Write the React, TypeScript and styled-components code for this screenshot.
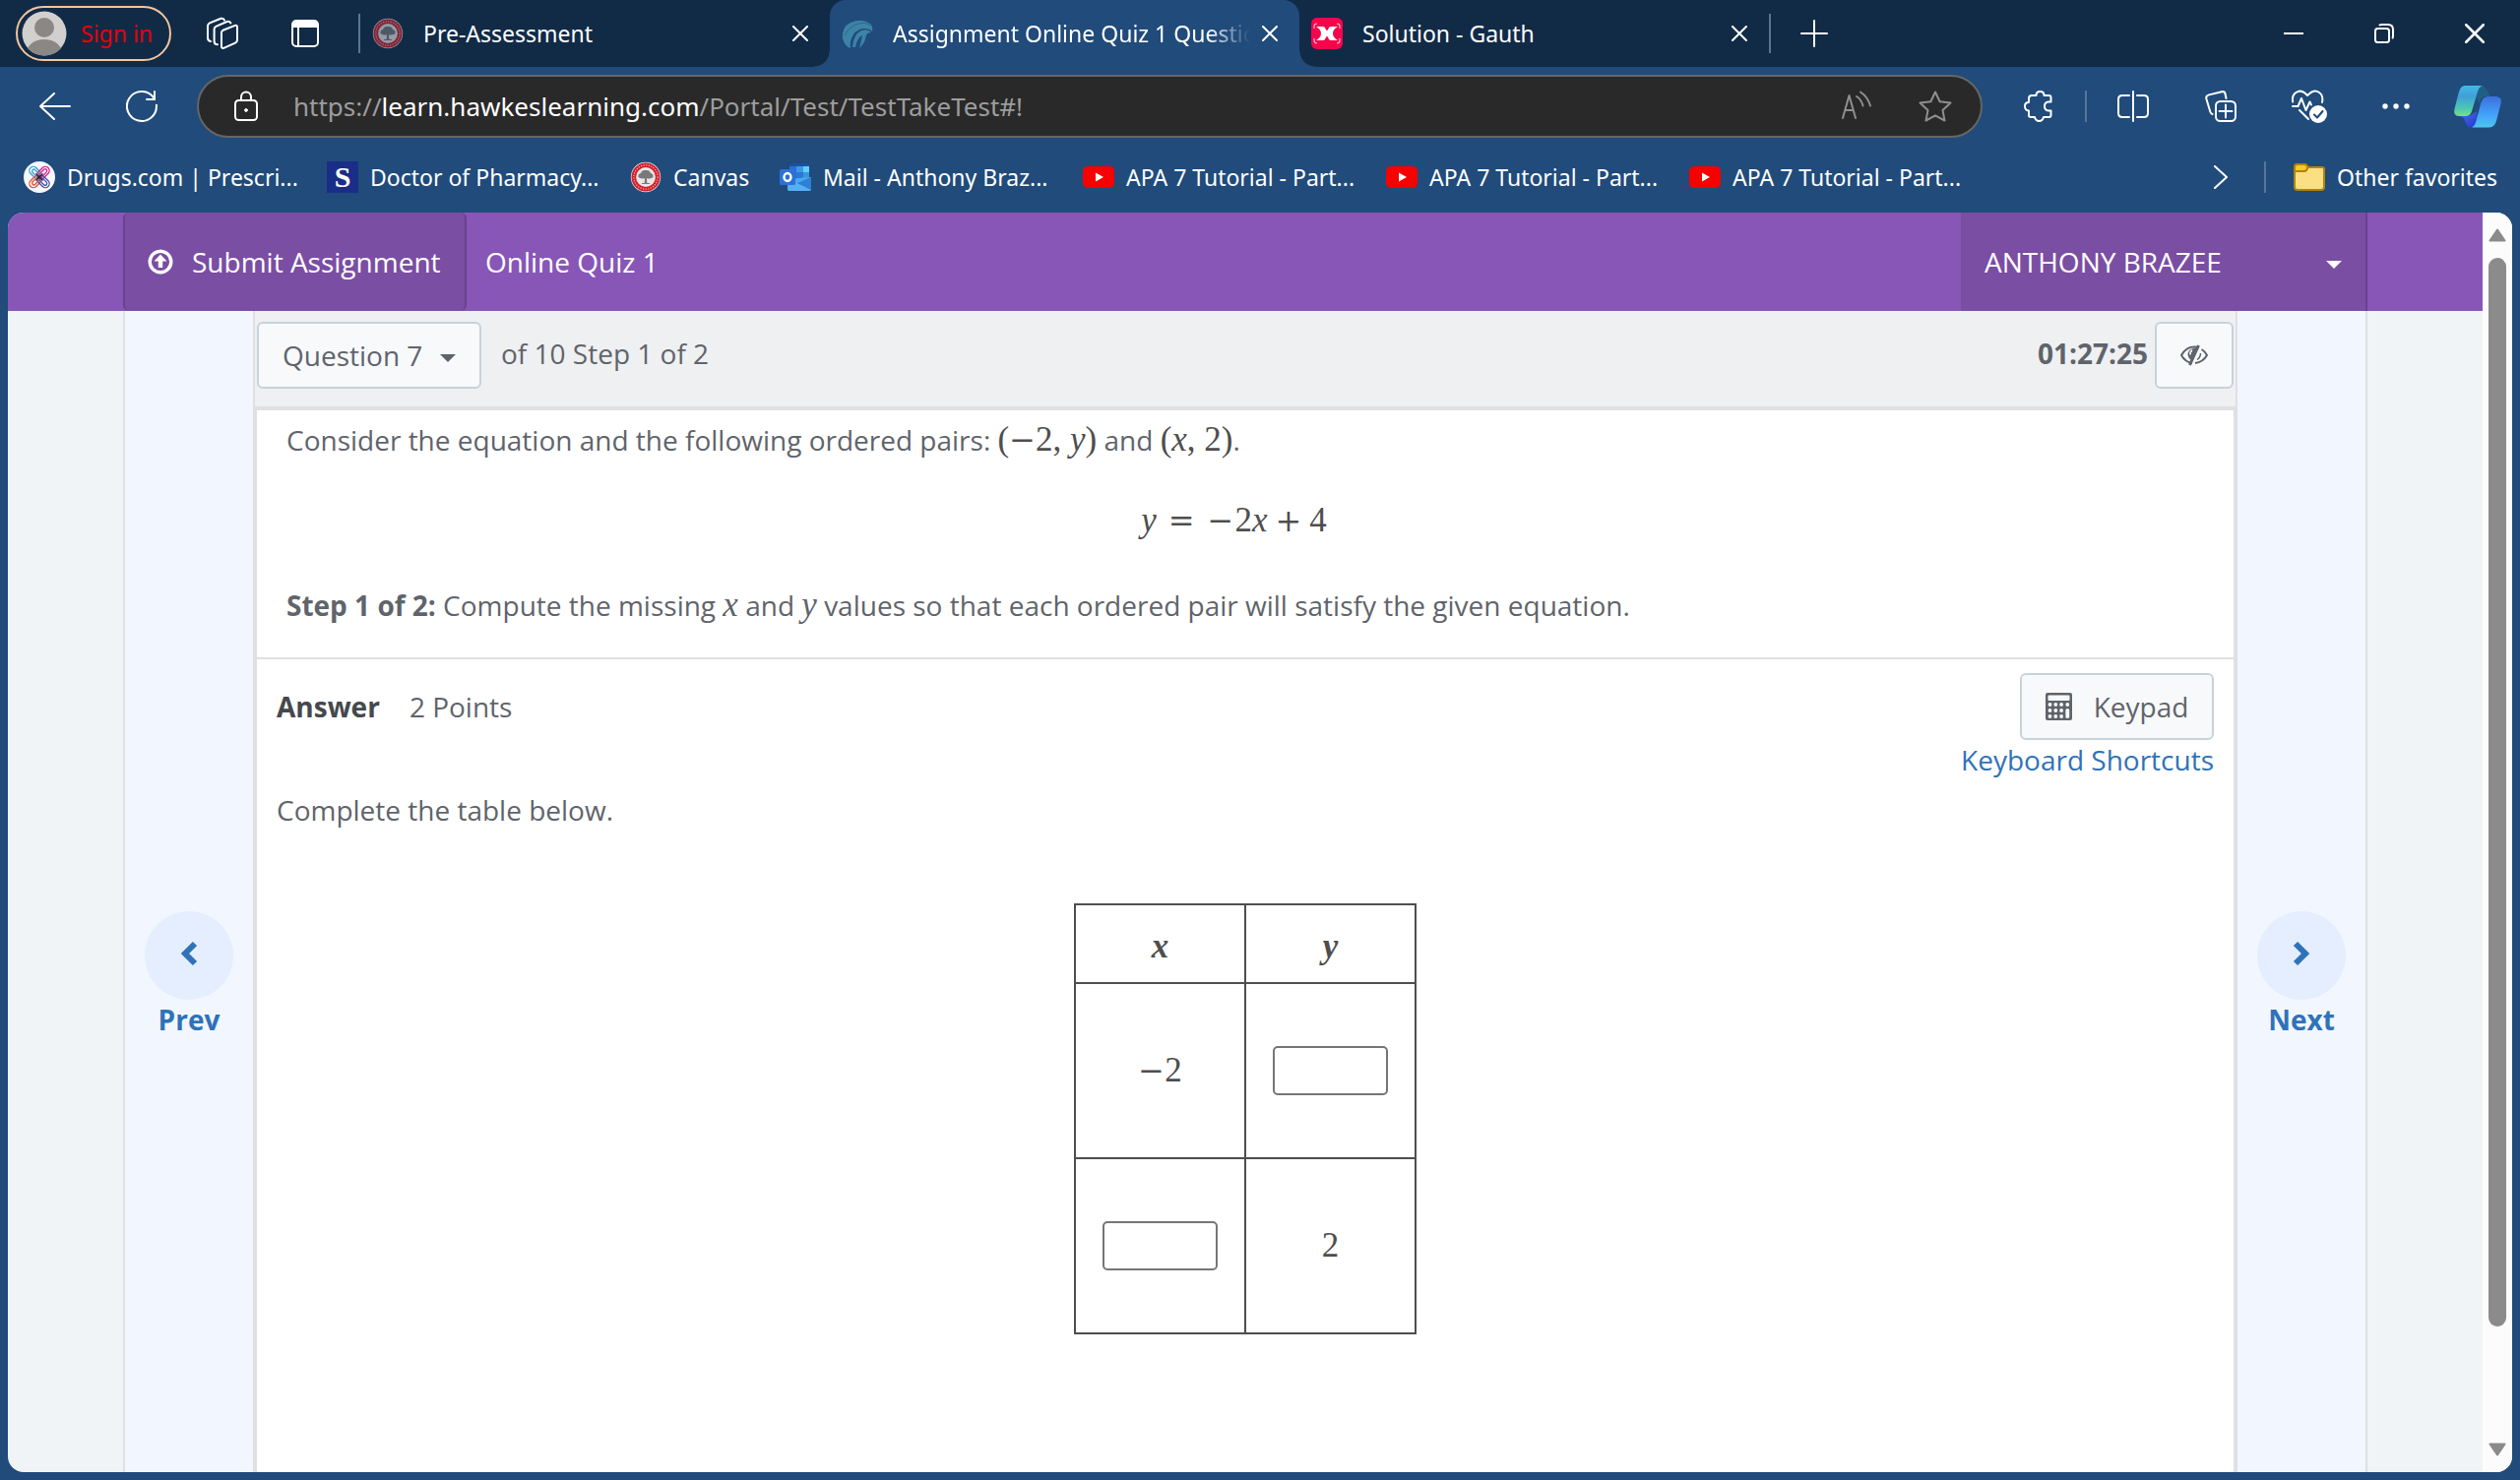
import React from "react";
import styled, { createGlobalStyle, css } from "styled-components";

const chromeFont = '"Noto Sans", "Open Sans", sans-serif';
const pageFont = '"Open Sans", "Noto Sans", sans-serif';
const mathFont = '"Liberation Serif", "Times New Roman", serif';

const GlobalStyle = createGlobalStyle`
  *, *::before, *::after { box-sizing: border-box; }
  html, body { margin: 0; padding: 0; overflow: hidden; }
  body { background: #204b7b; font-family: ${pageFont}; }
  button, input, select { font: inherit; color: inherit; margin: 0; }
  svg { display: block; flex: none; }
`;

/* ---------- Browser window ---------- */

const Window = styled.div`
  display: flex;
  flex-direction: column;
  height: 100vh;
  background: #204b7b;
  color: #ffffff;
  font-family: ${chromeFont};
  font-size: 23px;
  line-height: 32px;
`;

const TabStrip = styled.div`
  display: flex;
  align-items: center;
  flex: none;
  height: 68px;
  padding-left: 16px;
  background: #112b47;
`;

const plainButton = css`
  display: flex;
  align-items: center;
  justify-content: center;
  padding: 0;
  border: 0;
  background: none;
  cursor: pointer;
`;

const ProfileButton = styled.button`
  ${plainButton}
  justify-content: flex-start;
  gap: 14px;
  width: 158px;
  height: 56px;
  padding-left: 4px;
  border: 2px solid #f6c49b;
  border-radius: 28px;
  color: #e60008;
`;

const StripButton = styled.button<{ $width: number }>`
  ${plainButton}
  width: ${(p) => p.$width}px;
  height: 68px;
  flex: none;
`;

const StripIcons = styled.div`
  display: flex;
  padding-left: 10px;
  padding-right: 12px;
`;

const Divider = styled.span<{ $height: number; $gap?: number }>`
  flex: none;
  width: 2px;
  height: ${(p) => p.$height}px;
  margin: 0 ${(p) => p.$gap ?? 0}px;
  background: #587596;
`;

const Tab = styled.div<{ $active?: boolean }>`
  position: relative;
  display: flex;
  align-items: center;
  flex: 0 1 477px;
  min-width: 0;
  height: 68px;
  padding: 0 10px 0 12px;
  ${(p) =>
    p.$active &&
    css`
      background: #204b7b;
      border-radius: 16px 16px 0 0;
      &::before,
      &::after {
        content: "";
        position: absolute;
        bottom: 0;
        width: 16px;
        height: 16px;
      }
      &::before {
        left: -16px;
        background: radial-gradient(circle at 0 0, #112b47 15px, #204b7b 16px);
      }
      &::after {
        right: -16px;
        background: radial-gradient(circle at 100% 0, #112b47 15px, #204b7b 16px);
      }
    `}
`;

const TabTitle = styled.span<{ $fade?: boolean }>`
  flex: 1;
  min-width: 0;
  margin-left: 20px;
  overflow: hidden;
  white-space: nowrap;
  ${(p) => p.$fade && "mask-image: linear-gradient(to right, #000 88%, transparent 100%);"}
`;

const CloseButton = styled.button`
  ${plainButton}
  flex: none;
  width: 40px;
  height: 40px;
`;

const Spacer = styled.div`
  flex: 1;
`;

const Toolbar = styled.div`
  display: flex;
  align-items: center;
  flex: none;
  height: 80px;
  padding: 0 3px 0 12px;
`;

const ToolButton = styled.button<{ $width?: number }>`
  ${plainButton}
  flex: none;
  width: ${(p) => p.$width ?? 88}px;
  height: 64px;
`;

const AddressBar = styled.div`
  display: flex;
  align-items: center;
  flex: 1;
  height: 64px;
  margin: 0 13px 0 12px;
  padding-right: 6px;
  border: 2px solid #666666;
  border-radius: 32px;
  background: #292929;
  color: #9d9d9d;
  font-size: 26px;
  line-height: 40px;
`;

const UrlLabel = styled.label`
  white-space: pre;
`;

const Host = styled.span`
  color: #ffffff;
`;

const UrlInput = styled.input`
  flex: 1;
  min-width: 0;
  height: 56px;
  padding: 0;
  border: 0;
  outline: 0;
  background: none;
`;

const FavoritesBar = styled.nav`
  display: flex;
  align-items: center;
  flex: none;
  height: 64px;
  margin-bottom: 4px;
  padding: 0 24px;
`;

const Favorite = styled.a<{ $width?: number }>`
  display: flex;
  align-items: center;
  gap: 12px;
  flex: none;
  width: ${(p) => (p.$width ? `${p.$width}px` : "auto")};
  color: #ffffff;
  text-decoration: none;
  white-space: nowrap;
`;

const LetterBadge = styled.span`
  flex: none;
  width: 32px;
  height: 32px;
  background: #1b2e87;
  font: bold 30px/32px ${mathFont};
  text-align: center;
`;

/* ---------- Web page ---------- */

const Viewport = styled.div`
  display: flex;
  flex: 1;
  min-height: 0;
  margin: 0 8px 8px;
  overflow: hidden;
  border-radius: 16px;
  background: #f0f4f7;
  color: #5f646b;
  font-family: ${pageFont};
  font-size: 28px;
  line-height: 40px;
`;

const Page = styled.div`
  display: flex;
  flex-direction: column;
  flex: 1;
  min-width: 0;
`;

const PageHeader = styled.header`
  display: flex;
  flex: none;
  height: 100px;
  padding: 0 117px;
  background: #8756b7;
  color: #ffffff;
`;

const SubmitButton = styled.button`
  ${plainButton}
  justify-content: flex-start;
  gap: 19px;
  width: 349px;
  padding-left: 23px;
  border: solid #68428c;
  border-width: 0 2px;
  border-radius: 6px;
  background: #7a4ea3;
`;

const QuizTitle = styled.h1`
  flex: 1;
  margin: 0 19px;
  font-size: 28px;
  font-weight: 400;
  line-height: 100px;
`;

const UserButton = styled.button`
  ${plainButton}
  justify-content: space-between;
  width: 413px;
  padding: 0 24px;
  border-right: 2px solid #68428c;
  background: #7a4ea3;
`;

const Columns = styled.div`
  display: flex;
  flex: 1;
  min-height: 0;
  margin: 0 117px;
`;

const StepButton = styled.button<{ $side: "left" | "right" }>`
  display: flex;
  flex-direction: column;
  align-items: center;
  flex: none;
  width: 132px;
  padding: 610px 0 0;
  border: 0 solid #dfe1e4;
  border-${(p) => p.$side}-width: 2px;
  background: #f2f7ff;
  color: #3072b8;
  font-weight: 700;
  cursor: pointer;
`;

const StepCircle = styled.span`
  display: flex;
  align-items: center;
  justify-content: center;
  width: 90px;
  height: 90px;
  padding-bottom: 4px;
  border-radius: 50%;
  background: #e4eeff;
`;

const Main = styled.main`
  display: flex;
  flex-direction: column;
  flex: 1;
  min-width: 0;
  border: solid #dfe0e2;
  border-width: 0 2px;
`;

const QuestionBar = styled.div`
  display: flex;
  align-items: flex-start;
  flex: none;
  height: 97px;
  padding: 11px 2px 0;
  background: #eff0f2;
`;

const outlined = css`
  border: 2px solid #c6d3da;
  border-radius: 6px;
  background: #f8f9fb;
`;

const QuestionPicker = styled.label`
  ${outlined}
  display: grid;
  grid-template-columns: 1fr 40px;
  align-items: center;
  width: 228px;
  height: 68px;
  margin-right: 20px;

  > select {
    grid-area: 1 / 1 / 2 / 3;
    height: 64px;
    padding: 0 0 0 24px;
    border: 0;
    outline: 0;
    background: none;
    appearance: none;
  }
  > svg {
    grid-area: 1 / 2;
    pointer-events: none;
  }
`;

const BarText = styled.span`
  line-height: 64px;
`;

const Timer = styled.time`
  margin-left: auto;
  padding-right: 7px;
  font-weight: 700;
  line-height: 64px;
`;

const OutlinedButton = styled.button<{ $width: number }>`
  ${plainButton}
  ${outlined}
  gap: 22px;
  width: ${(p) => p.$width}px;
  height: 68px;
`;

const Sheet = styled.div`
  flex: 1;
  min-height: 0;
  border: 2px solid #e0e0e0;
  border-top-width: 4px;
  border-bottom: 0;
  background: #ffffff;
`;

const Problem = styled.section`
  padding: 10px 53px 33px 30px;
  border-bottom: 2px solid #e0e0e0;
`;

const Line = styled.p`
  height: 40px;
  margin: 0;
`;

const Equation = styled.div`
  height: 128px;
  padding-top: 42px;
  text-align: center;
`;

const Math = styled.span<{ $muted?: boolean }>`
  color: ${(p) => (p.$muted ? "inherit" : "#4e4e4e")};
  font-family: ${mathFont};
  font-size: 35px;
  white-space: nowrap;
`;

const Op = styled.span<{ $before?: number; $after?: number }>`
  margin-left: ${(p) => p.$before ?? 0}px;
  margin-right: ${(p) => p.$after ?? 0}px;
  font-family: "DejaVu Serif", serif;
  font-size: 32px;
  line-height: 1;
`;

const AnswerSection = styled.section`
  padding: 14px 20px 0;
`;

const AnswerHead = styled.div`
  display: flex;
  align-items: flex-start;
  gap: 30px;
  line-height: 68px;
`;

const AnswerTitle = styled.h2`
  margin: 0;
  color: #45484d;
  font-size: 28px;
  font-weight: 700;
`;

const Tools = styled.div`
  display: flex;
  flex-direction: column;
  align-items: flex-end;
  margin-left: auto;
  line-height: 40px;
`;

const ShortcutLink = styled.a`
  color: #3072b8;
  text-decoration: none;
`;

const Instruction = styled.p`
  margin: 11px 0 75px;
`;

const ValueTable = styled.table`
  width: 348px;
  margin: 0 auto;
  border-collapse: collapse;
  table-layout: fixed;
  color: #4e4e4e;

  th,
  td {
    padding: 0;
    border: 2px solid #4e4e4e;
    text-align: center;
    vertical-align: middle;
  }
  th {
    height: 80px;
    padding-top: 6px;
  }
  td {
    height: 178px;
  }
`;

const ValueInput = styled.input`
  display: block;
  width: 117px;
  height: 50px;
  margin: 0 auto;
  padding: 0 8px;
  border: 2px solid #767676;
  border-radius: 5px;
  background: #ffffff;
`;

const Scrollbar = styled.div`
  display: flex;
  flex-direction: column;
  align-items: center;
  flex: none;
  width: 30px;
  padding: 16px 0;
  background: #fcfcfc;
`;

const Track = styled.div`
  display: grid;
  grid-template-rows: 32fr 3fr;
  flex: 1;
  width: 18px;
  margin: 16px 0;
`;

const Thumb = styled.div`
  border-radius: 9px;
  background: #8b8b8b;
`;

/* ---------- Drawings ---------- */

const line = { fill: "none", stroke: "#ffffff", strokeWidth: 2, strokeLinecap: "round" as const, strokeLinejoin: "round" as const };

const Avatar = () => (
  <svg width="46" height="46" viewBox="0 0 46 46">
    <defs>
      <clipPath id="avatarClip">
        <circle cx="23" cy="23" r="22.5" />
      </clipPath>
    </defs>
    <circle cx="23" cy="23" r="22.5" fill="#d2d0ce" />
    <g fill="#8a8784" clipPath="url(#avatarClip)">
      <circle cx="23" cy="17" r="10" />
      <ellipse cx="23" cy="43" rx="18" ry="14" />
    </g>
  </svg>
);

const WorkspacesIcon = () => (
  <svg width="36" height="36" viewBox="0 0 36 36" {...line}>
    <path d="M18.5 14.8 30.8 9.9Q33 9.3 33 11.6V24.6Q33 26.8 31 27.7L19.3 32.8Q17 33.5 17 31.2V17.2Q17 15.5 18.5 14.8Z" />
    <path d="M13 29.2Q9.6 29.2 9.6 26V13.6Q9.6 11.6 11.4 10.8L22.5 6Q25 5.2 26.4 7.4" />
    <path d="M6 26Q3 25.4 3 22.4V10.6Q3 8.4 5 7.4L16.4 2.8Q18.8 2.2 20 4.4" />
  </svg>
);

const TabMenuIcon = () => (
  <svg width="28" height="28" viewBox="0 0 28 28">
    <rect x="1" y="1" width="26" height="26" rx="4" {...line} />
    <path d="M1 8V4Q1 1 4 1H24Q27 1 27 4V8Z" fill="#fff" />
    <path d="M7 8V27" {...line} />
  </svg>
);

const CloseIcon = ({ size = 16 }: { size?: number }) => (
  <svg width={size} height={size} viewBox="0 0 16 16" {...line}>
    <path d="M1 1 15 15M15 1 1 15" />
  </svg>
);

const PlusIcon = () => (
  <svg width="28" height="28" viewBox="0 0 28 28" {...line}>
    <path d="M14 1V27M1 14H27" />
  </svg>
);

const MinimizeIcon = () => (
  <svg width="20" height="20" viewBox="0 0 20 20" {...line}>
    <path d="M0 10H20" />
  </svg>
);

const RestoreIcon = () => (
  <svg width="20" height="20" viewBox="0 0 20 20" {...line}>
    <rect x="1" y="5" width="14" height="14" rx="2.5" />
    <path d="M5.5 1.4Q6.3 1 8 1H14Q19 1 19 6V12Q19 13.7 18.6 14.5" />
  </svg>
);

const BackIcon = () => (
  <svg width="32" height="28" viewBox="0 0 32 28" {...line}>
    <path d="M15 1 1 14 15 27M1 14H31" />
  </svg>
);

const RefreshIcon = () => (
  <svg width="32" height="32" viewBox="0 0 32 32" {...line}>
    <path d="M30.9 14.8A15 15 0 1 1 27.5 6.4L29 8.8" />
    <path d="M29 1V9H21" strokeLinejoin="miter" />
  </svg>
);

const LockIcon = () => (
  <svg width="24" height="32" viewBox="0 0 24 32" {...line}>
    <rect x="1" y="10" width="22" height="20" rx="3.5" />
    <path d="M7 10V6.5A5 5 0 0 1 17 6.5V10" />
    <circle cx="12" cy="20" r="1.4" fill="#fff" strokeWidth="1" />
  </svg>
);

const ReadAloudIcon = () => (
  <svg width="32" height="32" viewBox="0 0 32 32" {...line} stroke="#8f8f8f">
    <path d="M2 28 8.500 5 15 28M4.400 20H12.800" />
    <path d="M16 6Q21 9 22.500 15.500M20 1.500Q27.500 6.500 30 15.500" />
  </svg>
);

const StarIcon = () => (
  <svg width="34" height="32" viewBox="0 0 34 32" {...line} stroke="#8f8f8f">
    <path d="M17 1.500 21.600 11.200 32.500 12.500 24.500 20 26.500 30.500 17 25.400 7.500 30.500 9.500 20 1.500 12.500 12.400 11.200Z" />
  </svg>
);

const PuzzleIcon = () => (
  <svg width="30" height="32" viewBox="0 0 30 32" {...line}>
    <path d="M5 8Q5 5 8 5H12.500Q12.500 1 16.500 1T20.500 5H25.500Q27.500 5 27.500 7V11.500H25Q21 12 21 16T25 20.500H27.500V25Q27.500 27 25.500 27H20Q19 31 15.500 31T11 27H7Q5 27 5 25V20.500Q1 20 1 16T5 12Z" />
  </svg>
);

const SplitIcon = () => (
  <svg width="32" height="32" viewBox="0 0 32 32" {...line}>
    <path d="M16 1V31M12 5H5Q1 5 1 9V23Q1 27 5 27H12M20 5H27Q31 5 31 9V23Q31 27 27 27H20" />
  </svg>
);

const CollectionsIcon = () => (
  <svg width="32" height="32" viewBox="0 0 32 32" {...line}>
    <rect x="11" y="11" width="20" height="20" rx="4.500" />
    <path d="M21 14.500V27.500M14.500 21H27.500M21.500 8 20.600 3.600Q20 .6 17 1.200L4 4.400Q.6 5.400 1.400 8.500L5.300 21.500Q6 23.500 7.500 24" />
  </svg>
);

const HeartIcon = () => (
  <svg width="36" height="34" viewBox="0 0 36 34" {...line}>
    <path d="M1.200 12.500Q0 6 4.500 3T13.500 3.500L16 6 19 3.400Q23.500 0 28 3T31 13" />
    <path d="M1 17H6.500L10 9 14.500 21 18.500 12.500 20 15.500M8 21 17 30" />
    <circle cx="27" cy="25" r="9" fill="#fff" stroke="none" />
    <path d="M23 25.500 26 28.500 31.500 22" stroke="#204b7b" />
  </svg>
);

const DotsIcon = () => (
  <svg width="28" height="6" viewBox="0 0 28 6" fill="#fff">
    <circle cx="3" cy="3" r="2.700" />
    <circle cx="14" cy="3" r="2.700" />
    <circle cx="25" cy="3" r="2.700" />
  </svg>
);

const CopilotIcon = () => (
  <svg width="52" height="46" viewBox="0 0 52 46">
    <defs>
      <linearGradient id="copA" x1="0" y1="0" x2="0" y2="1">
        <stop offset="0" stopColor="#45b8e6" />
        <stop offset="0.35" stopColor="#3f9fd8" />
        <stop offset="0.75" stopColor="#4cc8b4" />
        <stop offset="1" stopColor="#7be07f" />
      </linearGradient>
      <linearGradient id="copB" x1="0" y1="0" x2="0" y2="1">
        <stop offset="0" stopColor="#3c6fdc" />
        <stop offset="0.6" stopColor="#43a3fb" />
        <stop offset="1" stopColor="#4cc6ec" />
      </linearGradient>
      <linearGradient id="copC" x1="0" y1="0" x2="1" y2="1">
        <stop offset="0" stopColor="#3f74e8" />
        <stop offset="1" stopColor="#2a31cf" />
      </linearGradient>
    </defs>
    <path d="M24 2H29Q34 2 36 8L39 13H33Q29 14 28 20L24 14Z" fill="#1f5f83" />
    <path d="M10 33H17L25 28 27 38Q24 44 19 44.500 15 44 13.500 39Q12.500 34 8 33Z" fill="url(#copC)" />
    <path d="M13 2H31Q27.500 3 26 8L20 28Q18.500 33 14 33H7Q1 32.500 2.400 26L7 8Q9 2 13 2Z" fill="url(#copA)" />
    <path d="M37 13H45Q51 13.500 49.600 20L45 38Q43 44 38 44.500H20Q23 43 24.500 38L29.500 19Q31.500 13 37 13Z" fill="url(#copB)" />
  </svg>
);

const SealIcon = ({ dim }: { dim?: boolean }) => (
  <svg width="32" height="32" viewBox="0 0 32 32" opacity={dim ? 0.6 : 1}>
    <circle cx="16" cy="16" r="15.200" fill="#e9e6e6" />
    <circle cx="16" cy="16" r="12.200" fill="none" stroke="#d1202c" strokeWidth="4.600" />
    <circle cx="16" cy="16" r="12.200" fill="none" stroke="#f0a9a9" strokeWidth="1.200" strokeDasharray="1.300 1.300" />
    <path d="M8.500 16Q8 12.500 11 12 12 8.500 16 9 20 8.500 21 12 24 12.500 23.500 16 22 18 17 17.200L17.300 22H14.700L15 17.200Q10 18 8.500 16Z" fill="#77797c" />
    <path d="M12 22.500H20" stroke="#77797c" />
  </svg>
);

const HawkIcon = () => (
  <svg width="32" height="32" viewBox="0 0 32 32">
    <path d="M1 21Q0 9 9 5 20 0 29 6 32 9 31 14 28 10.500 21 11 13 13 10 21 8 27 9 31 3 29 1 21Z" fill="#3c83a6" />
    <path d="M11 30Q12 17 20 13 27 11 30 15 25 15 24.500 20 23.500 26 18 31 20 23 21 18 16 20 14 30Z" fill="#3c83a6" />
    <path d="M3 18Q8 8 17 6T29 8" fill="none" stroke="#2c6992" strokeWidth="1" />
  </svg>
);

const GauthIcon = () => (
  <svg width="32" height="32" viewBox="0 0 32 32">
    <rect width="32" height="32" rx="6" fill="#f7054b" />
    <path d="M5 9H12Q14 9 14.500 11 15 13 16 13T17.500 11Q18 9 20 9H27Q22 12 22 16T27 23H20Q18 23 17.500 21 17 19 16 19T14.500 21Q14 23 12 23H5Q10 20 10 16T5 9Z" fill="#fff" />
    <path d="M3 11V9Q3 6 6 6M3 21V23Q3 26 6 26M29 11V9Q29 6 26 6M29 21V23Q29 26 26 26" fill="none" stroke="#ffb3c8" strokeWidth="1.200" />
  </svg>
);

const DrugsIcon = () => (
  <svg width="32" height="32" viewBox="0 0 32 32" fill="none" strokeWidth="1.300">
    <circle cx="16" cy="16" r="16" fill="#f7f8fb" />
    <g stroke="#3aa0dc">
      <rect x="5" y="7.500" width="14" height="8" rx="4" transform="rotate(45 12 11.500)" />
      <rect x="8" y="9.700" width="9" height="3.600" rx="1.800" transform="rotate(45 12 11.500)" />
    </g>
    <g stroke="#d6218b">
      <rect x="13" y="7.500" width="14" height="8" rx="4" transform="rotate(-45 20 11.500)" />
      <rect x="15.500" y="9.700" width="9" height="3.600" rx="1.800" transform="rotate(-45 20 11.500)" />
    </g>
    <g stroke="#e2513a">
      <rect x="5" y="16.500" width="14" height="8" rx="4" transform="rotate(-45 12 20.500)" />
      <rect x="8" y="18.700" width="9" height="3.600" rx="1.800" transform="rotate(-45 12 20.500)" />
    </g>
    <g stroke="#4a4fb0">
      <rect x="13" y="16.500" width="14" height="8" rx="4" transform="rotate(45 20 20.500)" />
      <rect x="15.500" y="18.700" width="9" height="3.600" rx="1.800" transform="rotate(45 20 20.500)" />
    </g>
    <path d="M12.500 12.500 19.500 19.500M19.500 12.500 12.500 19.500" stroke="#20242c" />
  </svg>
);

const OutlookIcon = () => (
  <svg width="32" height="32" viewBox="0 0 32 32">
    <path d="M10 3.500Q10 2 11.500 2H28.500Q30 2 30 3.500V20H10Z" fill="#2a6fd0" />
    <path d="M10 2H30V5H10Z" fill="#1c4ea0" />
    <path d="M17 5H24V11H17Z" fill="#3d9ae6" />
    <path d="M24 5H30V11H24Z" fill="#5fd0fb" />
    <path d="M24 11H30V17H24Z" fill="#3a96e2" />
    <path d="M17 11H24V17H17Z" fill="#2c78d4" />
    <path d="M8 18 32 16V28Q32 30 30 30H10Q8 30 8 28Z" fill="#4aa8ee" />
    <path d="M32 16V29L18 22Z" fill="#2f80d2" />
    <path d="M8 18 32 29.500 30 30H10Q8 30 8 28Z" fill="#55b0f2" />
    <rect y="8" width="16" height="16" rx="1.500" fill="#2b71d8" />
    <ellipse cx="8" cy="16" rx="3.500" ry="4" fill="none" stroke="#fff" strokeWidth="2.400" />
  </svg>
);

const YoutubeIcon = () => (
  <svg width="32" height="32" viewBox="0 0 32 32">
    <rect y="5" width="32" height="22" rx="5" fill="#f80000" />
    <path d="M13 11.500V20.500L21 16Z" fill="#fff" />
  </svg>
);

const FolderIcon = () => (
  <svg width="32" height="32" viewBox="0 0 32 32" stroke="#b0840b" strokeWidth="2" strokeLinejoin="round">
    <path d="M1 6Q1 3 4 3H11Q13 3 14 5L15 6H29Q31 6 31 8V26Q31 29 28 29H4Q1 29 1 26Z" fill="#fbdf83" />
    <path d="M1 10V6Q1 3 4 3H11Q13 3 14.500 6 13.500 10 11 10Z" fill="#f5c92f" />
  </svg>
);

const MoreIcon = () => (
  <svg width="14" height="24" viewBox="0 0 14 24" {...line}>
    <path d="M1 1 13 12 1 23" />
  </svg>
);

const UploadIcon = () => (
  <svg width="26" height="26" viewBox="0 0 26 26">
    <circle cx="13" cy="13" r="10.800" fill="none" stroke="#fff" strokeWidth="3.400" />
    <path d="M13 5.500 19.500 12.500H15.200V19H10.800V12.500H6.500Z" fill="#fff" />
  </svg>
);

const CaretIcon = () => (
  <svg width="16" height="14" viewBox="0 0 16 14" fill="currentColor">
    <path d="M0 6H16L8 14Z" />
  </svg>
);

const HideIcon = () => (
  <svg width="28" height="22" viewBox="0 0 28 22" fill="none" stroke="#5f646b" strokeWidth="2">
    <path d="M12 19Q5 18 1 11 6 2.500 14 2.500L17 2.800M15 19Q23 18 27 11 25 7 21.500 5" />
    <path d="M18.500 1 9.500 21" strokeWidth="3" />
    <path d="M14 4Q7.500 5 7.500 10.500 8 14 11 16L17 4Z" fill="#5f646b" stroke="none" />
    <path d="M12 6Q9.500 7.500 10 10.500" stroke="#f8f9fb" strokeWidth="1.500" />
    <path d="M20.500 9Q20.500 13 17 15.500" strokeWidth="1.500" />
  </svg>
);

const CalculatorIcon = () => (
  <svg width="27" height="28" viewBox="0 0 27 28">
    <rect width="27" height="28" rx="2" fill="#5f646b" />
    <rect x="2.500" y="2.500" width="22" height="5.500" rx="1" fill="#f8f9fb" />
    <g fill="#f8f9fb">
      {[12, 18, 24].flatMap((y) => [4.5, 10.3, 16.1].map((x) => <circle key={`${x}-${y}`} cx={x} cy={y} r="1.900" />))}
      <circle cx="22.300" cy="12" r="1.900" />
      <rect x="20.400" y="16" width="3.800" height="10" rx="1.800" />
    </g>
  </svg>
);

const Chevron = ({ flip }: { flip?: boolean }) => (
  <svg width="20" height="28" viewBox="0 0 20 28" fill="none" stroke="#3072b8" strokeWidth="6">
    <path d={flip ? "M4 4 14 14 4 24" : "M16 4 6 14 16 24"} />
  </svg>
);

const ScrollArrow = ({ down }: { down?: boolean }) => (
  <svg width="18" height="14" viewBox="0 0 18 14" fill="#8b8b8b" stroke="#8b8b8b" strokeWidth="2" strokeLinejoin="round">
    <path d={down ? "M1.500 1.500H16.500L9 12.500Z" : "M1.500 12.500H16.500L9 1.500Z"} />
  </svg>
);

/* ---------- Composition ---------- */

const tabs = [
  { title: "Pre-Assessment", icon: <SealIcon dim /> },
  { title: "Assignment Online Quiz 1 Question 7", icon: <HawkIcon />, active: true },
  { title: "Solution - Gauth", icon: <GauthIcon /> },
];

const favorites = [
  { label: "Drugs.com | Prescri...", icon: <DrugsIcon />, width: 308 },
  { label: "Doctor of Pharmacy...", icon: <LetterBadge>S</LetterBadge>, width: 308 },
  { label: "Canvas", icon: <SealIcon />, width: 152 },
  { label: "Mail - Anthony Braz...", icon: <OutlookIcon />, width: 308 },
  { label: "APA 7 Tutorial - Part...", icon: <YoutubeIcon />, width: 308 },
  { label: "APA 7 Tutorial - Part...", icon: <YoutubeIcon />, width: 308 },
  { label: "APA 7 Tutorial - Part...", icon: <YoutubeIcon />, width: 308 },
];

export default function App() {
  return (
    <Window>
      <GlobalStyle />
      <TabStrip>
        <ProfileButton>
          <Avatar />
          Sign in
        </ProfileButton>
        <StripIcons>
          <StripButton $width={84} aria-label="Workspaces"><WorkspacesIcon /></StripButton>
          <StripButton $width={84} aria-label="Tab actions"><TabMenuIcon /></StripButton>
        </StripIcons>
        <Divider $height={40} />
        {tabs.map((tab) => (
          <Tab key={tab.title} $active={tab.active}>
            {tab.icon}
            <TabTitle $fade={tab.active}>{tab.title}</TabTitle>
            <CloseButton aria-label="Close tab"><CloseIcon /></CloseButton>
          </Tab>
        ))}
        <Divider $height={40} />
        <StripButton $width={88} aria-label="New tab"><PlusIcon /></StripButton>
        <Spacer />
        <StripButton $width={92} aria-label="Minimize"><MinimizeIcon /></StripButton>
        <StripButton $width={92} aria-label="Restore"><RestoreIcon /></StripButton>
        <StripButton $width={92} aria-label="Close"><CloseIcon size={20} /></StripButton>
      </TabStrip>

      <Toolbar>
        <ToolButton aria-label="Back"><BackIcon /></ToolButton>
        <ToolButton aria-label="Refresh"><RefreshIcon /></ToolButton>
        <AddressBar>
          <ToolButton $width={96} aria-label="Site information"><LockIcon /></ToolButton>
          <UrlLabel htmlFor="url">
            https://<Host>learn.hawkeslearning.com</Host>
          </UrlLabel>
          <UrlInput id="url" defaultValue="/Portal/Test/TestTakeTest#!" />
          <ToolButton $width={80} aria-label="Read aloud"><ReadAloudIcon /></ToolButton>
          <ToolButton $width={80} aria-label="Add to favorites"><StarIcon /></ToolButton>
        </AddressBar>
        <ToolButton aria-label="Extensions"><PuzzleIcon /></ToolButton>
        <Divider $height={32} $gap={3} />
        <ToolButton aria-label="Split screen"><SplitIcon /></ToolButton>
        <ToolButton $width={90} aria-label="Collections"><CollectionsIcon /></ToolButton>
        <ToolButton $width={90} aria-label="Browser essentials"><HeartIcon /></ToolButton>
        <ToolButton $width={86} aria-label="Settings and more"><DotsIcon /></ToolButton>
        <ToolButton $width={80} aria-label="Copilot"><CopilotIcon /></ToolButton>
      </Toolbar>

      <FavoritesBar>
        {favorites.map((fav, i) => (
          <Favorite key={i} href="#" $width={fav.width}>
            {fav.icon}
            {fav.label}
          </Favorite>
        ))}
        <Spacer />
        <StripButton $width={32} aria-label="More favorites"><MoreIcon /></StripButton>
        <Divider $height={32} $gap={28} />
        <Favorite href="#" $width={206}>
          <FolderIcon />
          Other favorites
        </Favorite>
      </FavoritesBar>

      <Viewport>
        <Page>
          <PageHeader>
            <SubmitButton>
              <UploadIcon />
              Submit Assignment
            </SubmitButton>
            <QuizTitle>Online Quiz 1</QuizTitle>
            <UserButton>
              ANTHONY BRAZEE
              <CaretIcon />
            </UserButton>
          </PageHeader>

          <Columns>
            <StepButton $side="left">
              <StepCircle><Chevron /></StepCircle>
              Prev
            </StepButton>

            <Main>
              <QuestionBar>
                <QuestionPicker>
                  <select aria-label="Question" defaultValue="7">
                    {[1, 2, 3, 4, 5, 6, 7, 8, 9, 10].map((n) => (
                      <option key={n} value={n}>Question {n}</option>
                    ))}
                  </select>
                  <CaretIcon />
                </QuestionPicker>
                <BarText>of 10 Step 1 of 2</BarText>
                <Timer>01:27:25</Timer>
                <OutlinedButton $width={80} aria-label="Hide timer"><HideIcon /></OutlinedButton>
              </QuestionBar>

              <Sheet>
                <Problem>
                  <Line>
                    Consider the equation and the following ordered pairs:{" "}
                    <Math>
                      (<Op>−</Op>2, <i>y</i>)
                    </Math>{" "}
                    and{" "}
                    <Math>
                      (<i>x</i>, 2)
                    </Math>
                    .
                  </Line>
                  <Equation>
                    <Math>
                      <i>y</i>
                      <Op $before={12} $after={13}>=</Op>
                      <Op $after={1}>−</Op>2<i>x</i>
                      <Op $before={8} $after={8}>+</Op>4
                    </Math>
                  </Equation>
                  <Line>
                    <b>Step 1 of 2:</b> Compute the missing <Math $muted><i>x</i></Math> and <Math $muted><i>y</i></Math> values so that
                    each ordered pair will satisfy the given equation.
                  </Line>
                </Problem>

                <AnswerSection>
                  <AnswerHead>
                    <AnswerTitle>Answer</AnswerTitle>
                    <span>2 Points</span>
                    <Tools>
                      <OutlinedButton $width={197}>
                        <CalculatorIcon />
                        Keypad
                      </OutlinedButton>
                      <ShortcutLink href="#">Keyboard Shortcuts</ShortcutLink>
                    </Tools>
                  </AnswerHead>
                  <Instruction>Complete the table below.</Instruction>
                  <ValueTable>
                    <thead>
                      <tr>
                        <th><Math><i>x</i></Math></th>
                        <th><Math><i>y</i></Math></th>
                      </tr>
                    </thead>
                    <tbody>
                      <tr>
                        <td><Math><Op>−</Op>2</Math></td>
                        <td><ValueInput aria-label="y when x is -2" /></td>
                      </tr>
                      <tr>
                        <td><ValueInput aria-label="x when y is 2" /></td>
                        <td><Math>2</Math></td>
                      </tr>
                    </tbody>
                  </ValueTable>
                </AnswerSection>
              </Sheet>
            </Main>

            <StepButton $side="right">
              <StepCircle><Chevron flip /></StepCircle>
              Next
            </StepButton>
          </Columns>
        </Page>

        <Scrollbar>
          <ScrollArrow />
          <Track>
            <Thumb />
          </Track>
          <ScrollArrow down />
        </Scrollbar>
      </Viewport>
    </Window>
  );
}
